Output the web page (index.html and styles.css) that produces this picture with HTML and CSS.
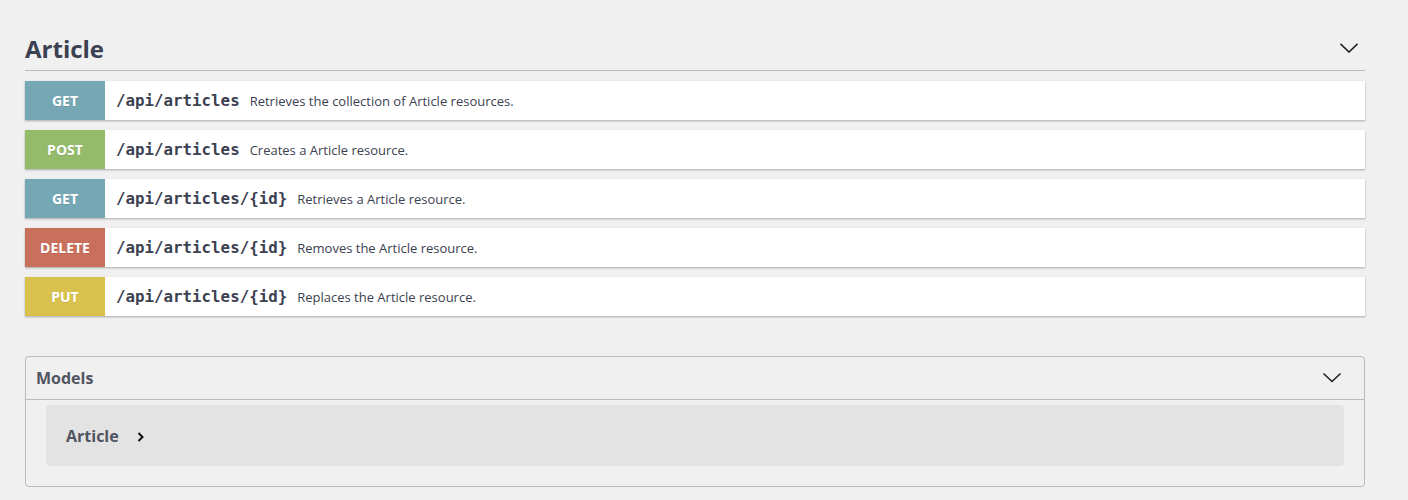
FILE: index.html
```html
<!DOCTYPE html>
<html>
<head>
<meta charset="utf-8">
<link rel="stylesheet" href="styles.css">
</head>
<body>
<div class="wrap">
  <div class="tag">
    <h3 class="tag-title">Article</h3>
    <svg class="chev" width="18" height="10" viewBox="0 0 18 10"><polyline points="0.5,0.8 9,9 17.5,0.8" fill="none" stroke="#222" stroke-width="1.6"/></svg>
  </div>
  <div class="ops">
    <div class="op"><span class="method get">GET</span><span class="path">/api/articles</span><span class="desc">Retrieves the collection of Article resources.</span></div>
    <div class="op"><span class="method post">POST</span><span class="path">/api/articles</span><span class="desc">Creates a Article resource.</span></div>
    <div class="op"><span class="method get">GET</span><span class="path">/api/articles/{id}</span><span class="desc">Retrieves a Article resource.</span></div>
    <div class="op"><span class="method delete">DELETE</span><span class="path">/api/articles/{id}</span><span class="desc">Removes the Article resource.</span></div>
    <div class="op"><span class="method put">PUT</span><span class="path">/api/articles/{id}</span><span class="desc">Replaces the Article resource.</span></div>
  </div>
  <section class="models">
    <div class="models-head">
      <span class="models-title">Models</span>
      <svg class="chev2" width="20" height="12" viewBox="0 0 20 12"><polyline points="1.5,1.5 10,9.5 18.5,1.5" fill="none" stroke="#222" stroke-width="1.6"/></svg>
    </div>
    <div class="model">
      <span class="model-name">Article</span>
      <svg class="chev3" width="8" height="12" viewBox="0 0 8 12"><polyline points="1.5,2 5.5,6 1.5,10" fill="none" stroke="#111" stroke-width="2"/></svg>
    </div>
  </section>
</div>
</body>
</html>
```
FILE: styles.css
```css
html, body {
  margin: 0;
  padding: 0;
  background: #f0f0f0;
}
body {
  font-family: "Open Sans", "Liberation Sans", sans-serif;
  color: #3b4151;
}
.wrap {
  padding: 32px 43px 0 25px;
}
.tag {
  display: flex;
  align-items: center;
  justify-content: space-between;
  border-bottom: 1px solid rgba(59, 65, 81, 0.3);
  padding-bottom: 5px;
  margin-bottom: 10px;
}
.tag-title {
  margin: 0;
  font-size: 24px;
  font-weight: 700;
  line-height: 33px;
  color: #3b4151;
}
.chev {
  margin-right: 7px;
  margin-top: -1px;
}
.ops {
  display: flex;
  flex-direction: column;
  gap: 10px;
}
.op {
  display: flex;
  align-items: center;
  height: 39px;
  background: #fff;
  box-shadow: 0 1px 2px rgba(0, 0, 0, 0.3);
}
.method {
  width: 80px;
  height: 100%;
  display: flex;
  align-items: center;
  justify-content: center;
  color: #fff;
  font-size: 14px;
  font-weight: 700;
  text-shadow: 0 1px 0 rgba(0, 0, 0, 0.1);
}
.get { background: #75a8b4; }
.post { background: #93bb6a; }
.delete { background: #c8705c; }
.put { background: #d8c24d; }
.path {
  margin-left: 11px;
  font-family: "DejaVu Sans Mono", "Liberation Mono", monospace;
  font-size: 15.8px;
  font-weight: 700;
  color: #3b4151;
}
.desc {
  margin-left: 10px;
  font-size: 13px;
  color: #3b4151;
}
.models {
  margin-top: 40px;
  border: 1px solid rgba(59, 65, 81, 0.3);
  border-radius: 4px;
  padding-bottom: 20px;
}
.models-head {
  display: flex;
  align-items: center;
  justify-content: space-between;
  height: 42px;
  padding: 0 22px 0 10px;
  border-bottom: 1px solid rgba(59, 65, 81, 0.3);
}
.models-title {
  font-size: 16px;
  font-weight: 700;
  color: #505561;
}
.model {
  margin: 5px 20px 0 20px;
  height: 61px;
  border-radius: 4px;
  background: rgba(0, 0, 0, 0.05);
  display: flex;
  align-items: center;
  padding-left: 20px;
}
.model-name {
  font-size: 16px;
  font-weight: 700;
  color: #505561;
}
.chev3 {
  margin-left: 18px;
  margin-top: 2px;
}
```
